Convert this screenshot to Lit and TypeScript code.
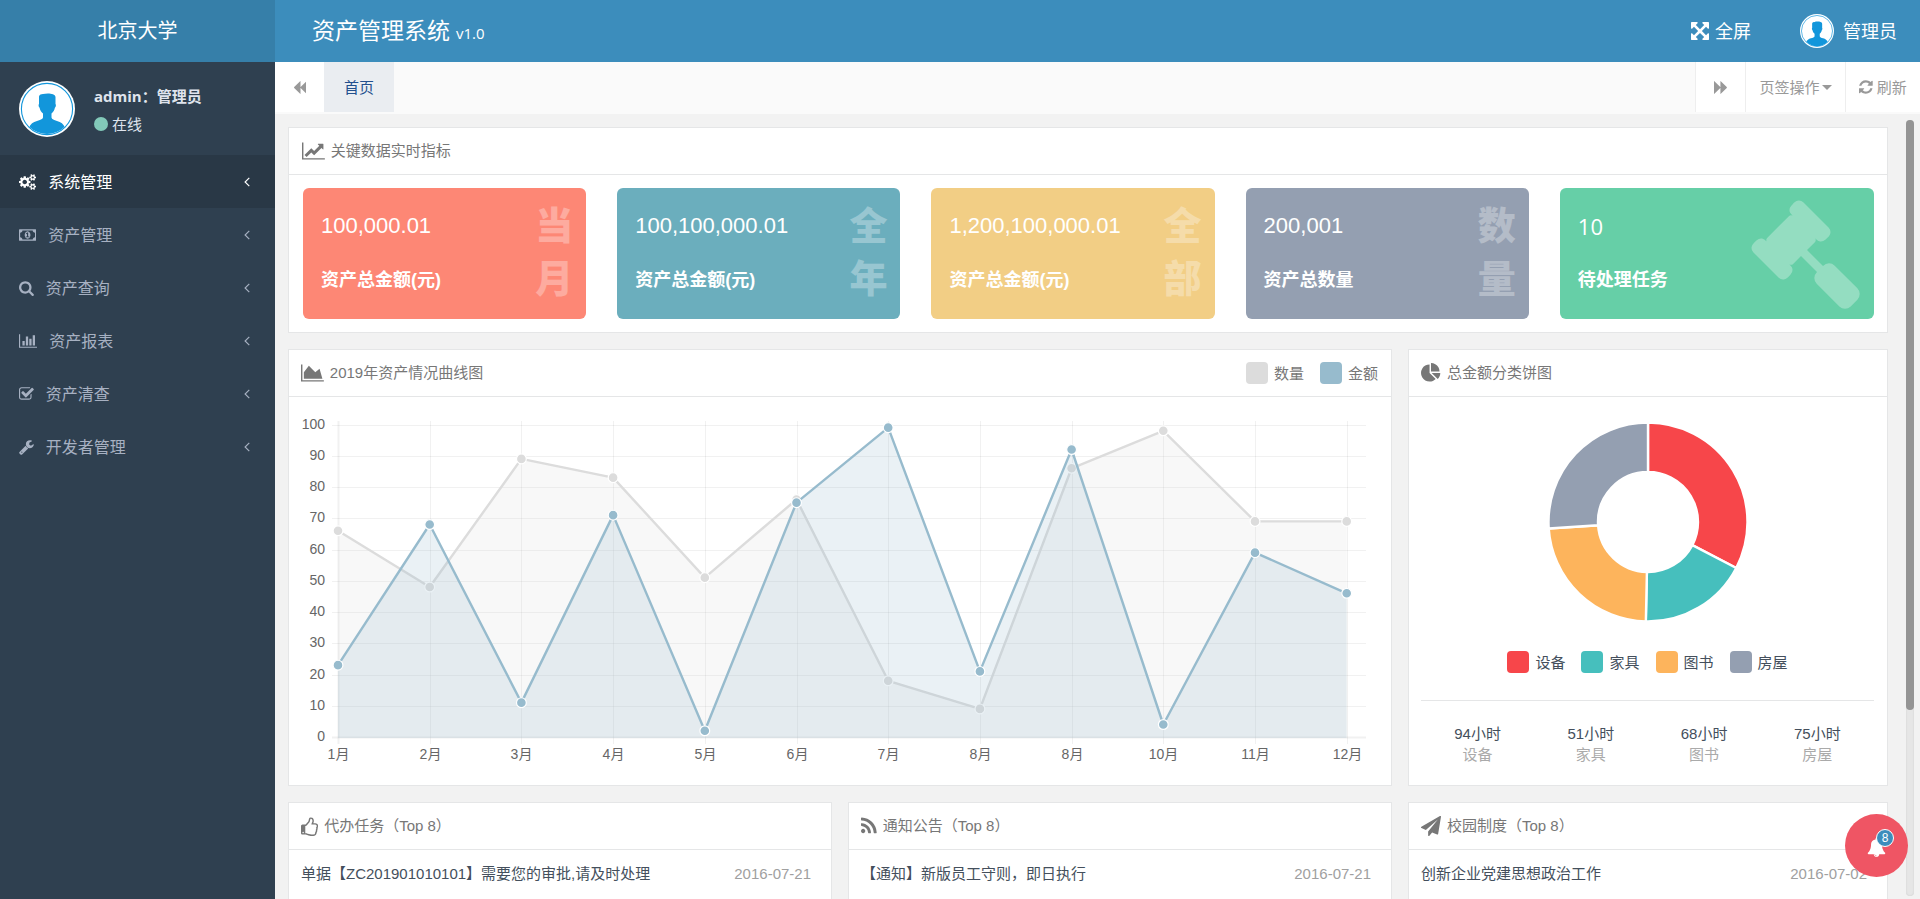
import { LitElement, html, svg, css } from "lit";
import { customElement, property } from "lit/decorators.js";
import { classMap } from "lit/directives/class-map.js";

// Icon outlines: [viewBox, path]
const ICONS: Record<string, [string, string]> = {
  cogs: ["0 0 1920 1792", "M896 896q0-106-75-181t-181-75-181 75-75 181 75 181 181 75 181-75 75-181zm768 512q0-52-38-90t-90-38-90 38-38 90q0 53 37.5 90.5t90.5 37.5 90.5-37.5 37.5-90.5zm0-1024q0-52-38-90t-90-38-90 38-38 90q0 53 37.5 90.5t90.5 37.5 90.5-37.5 37.5-90.5zm-384 421v185q0 10-7 19.5t-16 10.5l-155 24q-11 35-32 76 34 48 90 115 7 11 7 20 0 12-7 19-23 30-82.5 89.5t-78.5 59.5q-11 0-21-7l-115-90q-37 19-77 31-11 108-23 155-7 24-30 24h-186q-11 0-20-7.5t-10-17.5l-23-153q-34-10-75-31l-118 89q-7 7-20 7-11 0-21-8-144-133-144-160 0-9 7-19 10-14 41-53t47-61q-23-44-35-82l-152-24q-10-1-17-9.5t-7-19.5v-185q0-10 7-19.5t16-10.5l155-24q11-35 32-76-34-48-90-115-7-11-7-20 0-12 7-20 22-30 82-89t79-59q11 0 21 7l115 90q34-18 77-32 11-108 23-154 7-24 30-24h186q11 0 20 7.5t10 17.5l23 153q34 10 75 31l118-89q8-7 20-7 11 0 21 8 144 133 144 160 0 8-7 19-12 16-42 54t-45 60q23 48 34 82l152 23q10 2 17 10.5t7 19.5zm640 533v140q0 16-149 31-12 27-30 52 51 113 51 138 0 4-4 7-122 71-124 71-8 0-46-47t-52-68q-20 2-30 2t-30-2q-14 21-52 68t-46 47q-2 0-124-71-4-3-4-7 0-25 51-138-18-25-30-52-149-15-149-31v-140q0-16 149-31 13-29 30-52-51-113-51-138 0-4 4-7 4-2 35-20t59-34 30-16q8 0 46 46.5t52 67.5q20-2 30-2t30 2q51-71 92-112l6-2q4 0 124 70 4 3 4 7 0 25-51 138 17 23 30 52 149 15 149 31zm0-1024v140q0 16-149 31-12 27-30 52 51 113 51 138 0 4-4 7-122 71-124 71-8 0-46-47t-52-68q-20 2-30 2t-30-2q-14 21-52 68t-46 47q-2 0-124-71-4-3-4-7 0-25 51-138-18-25-30-52-149-15-149-31v-140q0-16 149-31 13-29 30-52-51-113-51-138 0-4 4-7 4-2 35-20t59-34 30-16q8 0 46 46.5t52 67.5q20-2 30-2t30 2q51-71 92-112l6-2q4 0 124 70 4 3 4 7 0 25-51 138 17 23 30 52 149 15 149 31z"],
  money: ["0 0 1920 1792", "M768 1152h384v-96h-128v-448h-114l-148 137 77 80q42-37 55-57h2v288h-128v96zm512-256q0 70-21 142t-59.5 134-101.5 101-138 39-138-39-101.5-101-59.5-134-21-142 21-142 59.5-134 101.5-101 138-39 138 39 101.5 101 59.5 134 21 142zm512 256v-512q-106 0-181-75t-75-181h-1152q0 106-75 181t-181 75v512q106 0 181 75t75 181h1152q0-106 75-181t181-75zm128-832v1152q0 26-19 45t-45 19h-1792q-26 0-45-19t-19-45v-1152q0-26 19-45t45-19h1792q26 0 45 19t19 45z"],
  search: ["64 0 1664 1792", "M1216 832q0-185-131.5-316.5t-316.5-131.5-316.5 131.5-131.5 316.5 131.5 316.5 316.5 131.5 316.5-131.5 131.5-316.5zm512 832q0 52-38 90t-90 38q-54 0-90-38l-343-342q-179 124-399 124-143 0-273.5-55.5t-225-150-150-225-55.5-273.5 55.5-273.5 150-225 225-150 273.5-55.5 273.5 55.5 225 150 150 225 55.5 273.5q0 220-124 399l343 343q37 37 37 90z"],
  bars: ["0 0 2048 1792", "M640 896v512h-256v-512h256zm384-512v1024h-256v-1024h256zm1024 1152v128h-2048v-1536h128v1408h1920zm-640-896v768h-256v-768h256zm384-384v1152h-256v-1152h256z"],
  check: ["64 0 1664 1792", "M1472 930v318q0 119-84.5 203.5t-203.5 84.5h-832q-119 0-203.5-84.5t-84.5-203.5v-832q0-119 84.5-203.5t203.5-84.5h832q63 0 117 25 15 7 18 23 3 17-9 29l-49 49q-10 10-23 10-3 0-9-2-23-6-45-6h-832q-66 0-113 47t-47 113v832q0 66 47 113t113 47h832q66 0 113-47t47-113v-254q0-13 9-22l64-64q10-10 23-10 6 0 12 3 20 8 20 29zm231-489l-814 814q-24 24-57 24t-57-24l-430-430q-24-24-24-57t24-57l110-110q24-24 57-24t57 24l263 263 647-647q24-24 57-24t57 24l110 110q24 24 24 57t-24 57z"],
  wrench: ["64 0 1664 1792", "M448 1472q0-26-19-45t-45-19-45 19-19 45 19 45 45 19 45-19 19-45zm644-420l-682 682q-37 37-90 37-52 0-91-37l-106-108q-38-36-38-90 0-53 38-91l681-681q39 98 114.5 173.5t173.5 114.5zm634-435q0 39-23 106-47 134-164.5 217.5t-258.5 83.5q-185 0-316.5-131.5t-131.5-316.5 131.5-316.5 316.5-131.5q58 0 121.5 16.5t107.5 46.5q16 11 16 28t-16 28l-293 169v224l193 107q5-3 79-48.5t135.5-81 70.5-35.5q15 0 23.5 10t8.5 25z"],
  angle: ["576 64 640 1792", "M1203 544q0 13-10 23l-393 393 393 393q10 10 10 23t-10 23l-50 50q-10 10-23 10t-23-10l-466-466q-10-10-10-23t10-23l466-466q10-10 23-10t23 10l50 50q10 10 10 23z"],
  line: ["0 0 2048 1792", "M2048 1536v128h-2048v-1536h128v1408h1920zm-128-1248v435q0 21-19.5 29.5t-35.5-7.5l-121-121-633 633q-10 10-23 10t-23-10l-233-233-416 416-192-192 585-585q10-10 23-10t23 10l233 233 464-464-121-121q-16-16-7.5-35.5t29.5-19.5h435q14 0 23 9t9 23z"],
  area: ["0 0 2048 1792", "M2048 1536v128h-2048v-1536h128v1408h1920zm-384-1024l256 896h-1664v-576l448-576 576 576z"],
  pie: ["0 0 1792 1792", "M768 890l546 546q-106 108-247.5 168t-298.5 60q-209 0-385.5-103t-279.5-279.5-103-385.5 103-385.5 279.5-279.5 385.5-103v762zm187 6h773q0 157-60 298.5t-168 247.5zm709-128h-768v-768q209 0 385.5 103t279.5 279.5 103 385.5z"],
  expand: ["128 128 1536 1536", "M1411 541l-355 355 355 355 144-144q29-31 70-14 39 17 39 59v448q0 26-19 45t-45 19h-448q-42 0-59-40-17-39 14-69l144-144-355-355-355 355 144 144q31 30 14 69-17 40-59 40h-448q-26 0-45-19t-19-45v-448q0-42 40-59 39-17 69 14l144 144 355-355-355-355-144 144q-19 19-45 19-12 0-24-5-40-17-40-59v-448q0-26 19-45t45-19h448q42 0 59 40 17 39-14 69l-144 144 355 355 355-355-144-144q-31-30-14-69 17-40 59-40h448q26 0 45 19t19 45v448q0 42-39 59-13 5-25 5-26 0-45-19z"],
  refresh: ["128 0 1536 1792", "M1639 1056q0 5-1 7-64 268-268 434.5t-478 166.5q-146 0-282.5-55t-243.5-157l-129 129q-19 19-45 19t-45-19-19-45v-448q0-26 19-45t45-19h448q26 0 45 19t19 45-19 45l-137 137q71 66 161 102t187 36q134 0 250-65t186-179q11-17 53-117 8-23 30-23h192q13 0 22.5 9.5t9.5 22.5zm25-800v448q0 26-19 45t-45 19h-448q-26 0-45-19t-19-45 19-45l138-138q-148-137-349-137-134 0-250 65t-186 179q-11 17-53 117-8 23-30 23h-199q-13 0-22.5-9.5t-9.5-22.5v-7q65-268 270-434.5t480-166.5q146 0 284 55.5t245 156.5l130-129q19-19 45-19t45 19 19 45z"],
  thumb: ["64 0 1536 1792", "M320 1472q0-26-19-45t-45-19-45 19-19 45 19 45 45 19 45-19 19-45zm1152-576q0-51-39-89.5t-89-38.5h-352q0-58 48-159.5t48-160.5q0-98-32-145t-128-47q-26 26-38 85t-30.5 125.5-59.5 109.5q-22 23-77 91-4 5-23 30t-31.5 41-34.5 42.5-40 44-38.5 35.5-40 27-35.5 9h-32v640h32q13 0 31.5 3t33 6.5 38 11 35 11.5 35.5 12.5 29 10.5q211 73 342 73h121q192 0 192-167 0-26-5-56 30-16 47.5-52.5t17.5-73.5-18-69q53-50 53-119 0-25-10-55.5t-25-47.5q32-1 53.5-47t21.5-81zm128-1q0 89-49 163 9 33 9 69 0 77-38 144 3 21 3 43 0 101-60 178 1 139-85 219.5t-227 80.5h-129q-96 0-189.5-22.5t-216.5-65.5q-116-40-138-40h-288q-53 0-90.5-37.5t-37.5-90.5v-640q0-53 37.5-90.5t90.5-37.5h274q36-24 137-155 58-75 107-128 24-25 35.5-85.5t30.5-126.5 62-108q39-37 90-37 84 0 151 32.5t102 101.5 35 186q0 93-48 192h176q104 0 180 76t76 179z"],
  rss: ["192 0 1408 1792", "M576 1344q0 80-56 136t-136 56-136-56-56-136 56-136 136-56 136 56 56 136zm512 123q2 28-17 48-18 21-47 21h-135q-25 0-43-16.5t-20-41.5q-22-229-184.5-391.5t-391.5-184.5q-25-2-41.5-20t-16.5-43v-135q0-29 21-47 17-17 43-17h5q160 13 306 80.5t259 181.5q114 113 181.5 259t80.5 306zm512 2q2 27-18 47-18 20-46 20h-143q-26 0-44.5-17.5t-19.5-42.5q-12-215-101-408.5t-231.5-336-336-231.5-408.5-102q-25-1-42.5-19.5t-17.5-43.5v-143q0-28 20-46 18-18 44-18h3q262 13 501.5 120t425.5 294q187 186 294 425.5t120 501.5z"],
  plane: ["0 0 1792 1792", "M1764 11q33 24 27 64l-256 1536q-5 29-32 45-14 8-31 8-11 0-24-5l-453-185-242 295q-18 23-49 23-13 0-22-4-19-7-30.5-23.5t-11.5-36.5v-349l864-1059-1069 925-395-162q-37-14-40-55-2-40 32-59l1664-960q15-9 32-9 20 0 36 11z"],
  bell: ["0 0 1792 1792", "M912 1696q0-16-16-16-59 0-101.5-42.5t-42.5-101.5q0-16-16-16t-16 16q0 73 51.5 124.5t124.5 51.5q16 0 16-16zm816-288q0 52-38 90t-90 38h-448q0 106-75 181t-181 75-181-75-75-181h-448q-52 0-90-38t-38-90q50-42 91-88t85-119.5 74.5-158.5 50-206 19.5-260q0-152 117-282.5t307-158.5q-8-19-8-39 0-40 28-68t68-28 68 28 28 68q0 20-8 39 190 28 307 158.5t117 282.5q0 139 19.5 260t50 206 74.5 158.5 85 119.5 91 88z"],
  backward: ["64 0 1664 1792", "M1683 141q19-19 32-13t13 32v1472q0 26-13 32t-32-13l-710-710q-9-9-13-19v710q0 26-13 32t-32-13l-710-710q-19-19-19-45t19-45l710-710q19-19 32-13t13 32v710q4-10 13-19z"],
  forward: ["64 0 1664 1792", "M109 1651q-19 19-32 13t-13-32v-1472q0-26 13-32t32 13l710 710q9 9 13 19v-710q0-26 13-32t32 13l710 710q19 19 19 45t-19 45l-710 710q-19 19-32 13t-13-32v-710q-4 10-13 19z"],
  gavel: ["0 0 1792 1792", "M1771 1536q0 53-37 90l-107 108q-39 37-91 37-53 0-90-37l-363-364q-38-36-38-90 0-53 43-96l-256-256-126 126q-14 14-34 14t-34-14q2 2 12.5 12t12.5 13 10 11.5 10 13.5 6 13.5 5.5 16.5 1.5 18q0 38-28 68-3 3-16.5 18t-19 20.5-18.5 16.5-22 15.5-22 9-26 4.5q-40 0-68-28l-408-408q-28-28-28-68 0-13 4.5-26t9-22 15.5-22 16.5-18.5 20.5-19 18-16.5q30-28 68-28 10 0 18 1.5t16.5 5.5 13.5 6 13.5 10 11.5 10 13 12.5 12 12.5q-14-14-14-34t14-34l348-348q14-14 34-14t34 14q-2-2-12.5-12t-12.5-13-10-11.5-10-13.5-6-13.5-5.5-16.5-1.5-18q0-38 28-68 3-3 16.5-18t19-20.5 18.5-16.5 22-15.5 22-9 26-4.5q40 0 68 28l408 408q28 28 28 68 0 13-4.5 26t-9 22-15.5 22-16.5 18.5-20.5 19-18 16.5q-30 28-68 28-10 0-18-1.5t-16.5-5.5-13.5-6-13.5-10-11.5-10-13-12.5-12-12.5q14 14 14 34t-14 34l-126 126 256 256q43-43 96-43 52 0 91 37l363 363q37 39 37 91z"],
};

@customElement("fa-icon")
class FaIcon extends LitElement {
  @property() name = "";
  static styles = css`
    :host { display: inline-flex; height: 1em; flex: none; }
    svg { height: 100%; width: auto; fill: currentColor; display: block; }
  `;
  render() {
    const [box, d] = ICONS[this.name];
    return html`<svg viewBox=${box} aria-hidden="true"><path d=${d}></path></svg>`;
  }
}

@customElement("user-avatar")
class UserAvatar extends LitElement {
  static styles = css`
    :host { display: block; flex: none; }
    svg { display: block; width: 100%; height: 100%; }
  `;
  render() {
    return html`<svg viewBox="0 0 56 56" aria-hidden="true">
      <defs><clipPath id="ring"><circle cx="28" cy="28" r="25"></circle></clipPath></defs>
      <circle cx="28" cy="28" r="28" fill="#fff"></circle>
      <circle cx="28" cy="28" r="25.6" fill="none" stroke="#1296db" stroke-width="1.1"></circle>
      <path clip-path="url(#ring)" fill="#1296db"
        d="M20 15.500c.6-2 2-2.200 4-2.500 4-.8 12-1 12.500 3v7c.8 1 .3 3-.6 3.800-.5 2.500-1.500 4.200-3.400 5.800v4c.3 1.800 2.500 2.600 5.500 3.300 4 1 6.500 3 8 6.500v10H10v-10c1.500-3.500 4-5.500 8-6.500 3-.7 5.700-1.500 6-3.300v-4c-1.900-1.600-2.900-3.300-3.400-5.800-.9-.8-1.400-2.800-.6-3.800z"></path>
    </svg>`;
  }
}

const MONTHS = ["1月", "2月", "3月", "4月", "5月", "6月", "7月", "8月", "8月", "10月", "11月", "12月"];
const SERIES = [
  { name: "数量", color: "#dcdcdc", data: [66, 48, 89, 83, 51, 76, 18, 9, 86, 98, 69, 69] },
  { name: "金额", color: "#97bbcd", data: [23, 68, 11, 71, 2, 75, 99, 21, 92, 4, 59, 46] },
];

@customElement("line-chart")
class LineChart extends LitElement {
  static styles = css`
    :host { display: block; }
    svg { display: block; width: 100%; height: auto; }
    .grid { stroke: rgba(0, 0, 0, 0.055); stroke-width: 1; }
    .axis { stroke: rgba(0, 0, 0, 0.055); stroke-width: 2; }
    text { font: 14px "Liberation Sans", "Noto Sans CJK SC", sans-serif; fill: #666; }
    .end { text-anchor: end; }
    .mid { text-anchor: middle; }
  `;
  render() {
    const left = 37, step = 91.7, bottom = 327, unit = 3.125;
    const px = (i: number) => left + i * step;
    const py = (v: number) => bottom - v * unit;
    const rows = Array.from({ length: 11 }, (_, i) => i * 10);
    return html`<svg viewBox="0 0 1077 362" role="img" aria-label="2019年资产情况曲线图">
      ${rows.map((v) => {
        const y = Math.round(py(v)) + 0.5;
        return svg`<line class=${v ? "grid" : "axis"} x1="31" x2="1065" y1=${y} y2=${y}></line>
          <text class="end" x="24" y=${Math.round(py(v)) + 4}>${v}</text>`;
      })}
      ${MONTHS.map((m, i) => {
        const x = Math.round(px(i)) + 0.5;
        return svg`<line class=${i ? "grid" : "axis"} x1=${x} x2=${x} y1="11" y2="334"></line>
          <text class="mid" x=${x} y="349">${m}</text>`;
      })}
      ${SERIES.map((s) => {
        const pts = s.data.map((v, i) => `${px(i).toFixed(1)},${py(v).toFixed(1)}`).join(" ");
        return svg`
          <polygon points=${`${left},${bottom + 1} ${pts} ${px(11)},${bottom + 1}`} fill=${s.color} fill-opacity="0.2"></polygon>
          <polyline points=${pts} fill="none" stroke=${s.color} stroke-width="2.4" stroke-linejoin="round"></polyline>
          ${s.data.map((v, i) => svg`<circle cx=${px(i)} cy=${py(v)} r="4.9" fill=${s.color} stroke="#fff" stroke-width="1.200"></circle>`)}`;
      })}
    </svg>`;
  }
}

const SLICES = [
  { name: "设备", hours: 94, color: "#f7464a" },
  { name: "家具", hours: 51, color: "#46bfbd" },
  { name: "图书", hours: 68, color: "#fdb45c" },
  { name: "房屋", hours: 75, color: "#949fb1" },
];

@customElement("donut-chart")
class DonutChart extends LitElement {
  static styles = css`
    :host { display: block; width: 200px; height: 200px; }
    svg { display: block; width: 100%; height: 100%; }
  `;
  render() {
    const total = SLICES.reduce((n, s) => n + s.hours, 0);
    const R = 99.5, r = 50;
    let at = -Math.PI / 2;
    const pt = (rad: number, a: number) => `${(rad * Math.cos(a)).toFixed(2)} ${(rad * Math.sin(a)).toFixed(2)}`;
    return html`<svg viewBox="-100 -100 200 200" role="img" aria-label="总金额分类饼图">
      ${SLICES.map((s) => {
        const a = at;
        const b = (at += (s.hours / total) * Math.PI * 2);
        return svg`<path fill=${s.color} stroke="#fff" stroke-width="2.400"
          d=${`M${pt(R, a)}A${R} ${R} 0 0 1 ${pt(R, b)}L${pt(r, b)}A${r} ${r} 0 0 0 ${pt(r, a)}Z`}></path>`;
      })}
    </svg>`;
  }
}

const MENU = [
  { icon: "cogs", text: "系统管理", active: true },
  { icon: "money", text: "资产管理" },
  { icon: "search", text: "资产查询" },
  { icon: "bars", text: "资产报表" },
  { icon: "check", text: "资产清查" },
  { icon: "wrench", text: "开发者管理" },
];

const CARDS = [
  { tone: "coral", value: "100,000.01", label: "资产总金额(元)", mark: ["当", "月"] },
  { tone: "teal", value: "100,100,000.01", label: "资产总金额(元)", mark: ["全", "年"] },
  { tone: "amber", value: "1,200,100,000.01", label: "资产总金额(元)", mark: ["全", "部"] },
  { tone: "slate", value: "200,001", label: "资产总数量", mark: ["数", "量"] },
  { tone: "green", value: "10", label: "待处理任务", mark: null },
];

const LISTS = [
  { icon: "thumb", title: "代办任务（Top 8）", items: [["单据【ZC201901010101】需要您的审批,请及时处理", "2016-07-21"]] },
  { icon: "rss", title: "通知公告（Top 8）", items: [["【通知】新版员工守则，即日执行", "2016-07-21"]] },
  { icon: "plane", title: "校园制度（Top 8）", items: [["创新企业党建思想政治工作", "2016-07-02"]] },
];

@customElement("app-root")
class AppRoot extends LitElement {
  static styles = css`
    :host {
      display: grid;
      grid-template-columns: 275px minmax(0, 1fr);
      height: 100vh;
      overflow: hidden;
      font: 15px/21px "Liberation Sans", "Noto Sans CJK SC", sans-serif;
      color: #444f5c;
      background: #f2f2f2;
    }
    * { box-sizing: border-box; }
    button { font: inherit; color: inherit; background: none; border: 0; padding: 0; margin: 0; cursor: pointer; }
    a { color: inherit; text-decoration: none; }
    ul { list-style: none; margin: 0; padding: 0; }
    h1, h2, p { margin: 0; font: inherit; }

    .side { background: #2f4050; color: #a7b1c2; font-family: "Open Sans", "Noto Sans CJK SC", sans-serif; }
    .brand { display: flex; align-items: center; justify-content: center; height: 62px;
      background: #367fa9; color: #fff; font-size: 20px; line-height: 28px; }
    .profile { display: flex; align-items: center; gap: 19px; height: 93px; padding: 0 19px; color: #dfe4ed; }
    .profile user-avatar { width: 56px; height: 56px; }
    .who { font-weight: 700; line-height: 30px; }
    .state { display: flex; align-items: center; gap: 4px; line-height: 26px; }
    .dot { width: 14px; height: 14px; border-radius: 50%; background: #82c9b9; }
    .item { display: flex; align-items: center; gap: 12px; height: 53px; padding: 0 25px 0 19px; font-size: 16px; line-height: 24px; }
    .item.active { background: #293846; color: #fff; }
    .item .more { margin-left: auto; }

    .page { display: grid; grid-template-rows: 62px 52px minmax(0, 1fr); min-width: 0; min-height: 0; }
    .top { display: flex; align-items: center; padding: 0 23px 0 37px; background: #3c8dbc; color: #fff;
      font-family: "Open Sans", "Noto Sans CJK SC", sans-serif; font-size: 18px; line-height: 26px; }
    .title { flex: 1; font-size: 23px; line-height: 32px; }
    .title small { font-size: 15px; }
    .full { display: flex; align-items: center; gap: 6px; margin-right: 49px; }
    .user { display: flex; align-items: center; gap: 9px; }
    .user user-avatar { width: 34px; height: 34px; }

    .tabs { display: flex; align-items: flex-start; background: #fafafa; color: #999; }
    .tabs button { display: flex; align-items: center; justify-content: center; height: 50px; background: #fff; }
    .roll { width: 49px; }
    .tabs .tab { padding: 0 20px; background: #eaedf1; color: #23508e; }
    .tabs .edge { border-left: 1px solid #eee; }
    .space { flex: 1; }
    .roll.edge { width: 50px; }
    .ops { width: 100px; gap: 2px; }
    .ops::after { content: ""; border: 5px solid transparent; border-top-color: currentColor; border-bottom: 0; }
    .reload { width: 75px; gap: 4px; }
    .reload fa-icon { font-size: 16px; }

    .body { display: flex; min-height: 0; }
    .main { flex: 1; min-width: 0; overflow: hidden; display: flex; flex-direction: column; gap: 16px; padding: 13px 18px 0 13px; }
    .track { width: 8px; margin: 6px 6px 3px 0; border-radius: 4px; background: #e6e6e6; box-shadow: inset 0 0 2px #ccc; }
    .thumb { height: 76%; border-radius: 4px; background: #949494; }

    .panel { background: #fff; border: 1px solid #e5e6e7; min-width: 0; flex: none; }
    .head { display: flex; align-items: center; gap: 6px; height: 47px; padding: 0 13px; border-bottom: 1px solid #e5e6e7; color: #777; }
    .row .head { padding-left: 12px; }
    .head > fa-icon { font-size: 20px; }
    .head h2 { flex: 1; padding-bottom: 2px; }
    .inner { padding: 13px 13px 13px 12px; }

    .cards { display: grid; grid-template-columns: repeat(5, minmax(0, 1fr)); padding: 13px 13px 13px 14px; }
    .cell { padding-right: 31px; }
    .cell:last-child { padding-right: 0; }
    .card { display: flex; justify-content: space-between; height: 131px; padding: 10px 13px 10px 18px; border-radius: 6px; color: #fff; }
    .coral { background: #fd8775; }
    .teal { background: #6baebd; }
    .amber { background: #f2ce85; }
    .slate { background: #949fb1; }
    .green { background: #66cfa7; }
    .value { padding-top: 1px; font-size: 22px; line-height: 54px; }
    .green .value { font-family: "Open Sans", sans-serif; }
    .label { font-size: 18px; line-height: 54px; font-weight: 700; white-space: nowrap; }
    .mark { display: flex; flex-direction: column; padding-top: 2px; font-size: 38px; line-height: 53px; font-weight: 900; opacity: 0.3; }
    .gavel { font-size: 112px; opacity: 0.3; }

    .row { display: grid; grid-template-columns: 34fr 34fr 30fr; gap: 16px; flex: none; }
    .wide { grid-column: span 2; }
    .keys { display: flex; align-items: center; gap: 16px; }
    .key { display: flex; align-items: center; gap: 6px; }
    .swatch { width: 22px; height: 22px; border-radius: 4px; }
    .donut { display: flex; flex-direction: column; align-items: center; gap: 29px; padding: 12px 0 27px; border-bottom: 1px solid #e5e6e7; }
    .stats { display: grid; grid-template-columns: repeat(4, 1fr); padding-top: 22px; text-align: center; }
    .stats span { display: block; color: #aaa; }

    .list { min-height: 320px; padding: 13px 13px 13px 12px; }
    .list li { display: flex; justify-content: space-between; padding-right: 7px; }
    time { color: #a0a0a0; }

    .fab { position: fixed; right: 12px; bottom: 22px; width: 63px; height: 63px; border-radius: 50%;
      display: flex; align-items: center; justify-content: center; padding-top: 4px; background: #ef5564; color: #fff; font-size: 19px; }
    .badge { position: absolute; top: 15px; right: 14px; width: 18px; height: 18px; border: 1px solid #fff; border-radius: 50%;
      background: #3c8dbc; font-size: 12px; line-height: 16px; text-align: center; }
  `;

  render() {
    return html`
      <aside class="side">
        <div class="brand">北京大学</div>
        <div class="profile">
          <user-avatar></user-avatar>
          <div>
            <p class="who">admin：管理员</p>
            <p class="state"><i class="dot"></i>在线</p>
          </div>
        </div>
        <nav>
          ${MENU.map((m) => html`<a href="#" class=${classMap({ item: true, active: !!m.active })}>
            <fa-icon name=${m.icon}></fa-icon><span>${m.text}</span><fa-icon class="more" name="angle"></fa-icon>
          </a>`)}
        </nav>
      </aside>
      <div class="page">
        <header class="top">
          <h1 class="title">资产管理系统 <small>v1.0</small></h1>
          <button class="full"><fa-icon name="expand"></fa-icon>全屏</button>
          <button class="user"><user-avatar></user-avatar>管理员</button>
        </header>
        <div class="tabs">
          <button class="roll" aria-label="向左"><fa-icon name="backward"></fa-icon></button>
          <button class="tab">首页</button>
          <span class="space"></span>
          <button class="roll edge" aria-label="向右"><fa-icon name="forward"></fa-icon></button>
          <button class="ops edge">页签操作</button>
          <button class="reload edge"><fa-icon name="refresh"></fa-icon>刷新</button>
        </div>
        <div class="body">
          <main class="main">
            <section class="panel">
              <div class="head"><fa-icon name="line"></fa-icon><h2>关键数据实时指标</h2></div>
              <div class="cards">
                ${CARDS.map((c) => html`<div class="cell"><div class="card ${c.tone}">
                  <div><p class="value">${c.value}</p><p class="label">${c.label}</p></div>
                  ${c.mark
                    ? html`<div class="mark">${c.mark.map((t) => html`<span>${t}</span>`)}</div>`
                    : html`<fa-icon class="gavel" name="gavel"></fa-icon>`}
                </div></div>`)}
              </div>
            </section>
            <div class="row">
              <section class="panel wide">
                <div class="head">
                  <fa-icon name="area"></fa-icon><h2>2019年资产情况曲线图</h2>
                  <div class="keys">${SERIES.map((s) => html`<span class="key">
                    <i class="swatch" style="background:${s.color}"></i>${s.name}</span>`)}</div>
                </div>
                <div class="inner"><line-chart></line-chart></div>
              </section>
              <section class="panel">
                <div class="head"><fa-icon name="pie"></fa-icon><h2>总金额分类饼图</h2></div>
                <div class="inner">
                  <div class="donut">
                    <donut-chart></donut-chart>
                    <div class="keys">${SLICES.map((s) => html`<span class="key">
                      <i class="swatch" style="background:${s.color}"></i>${s.name}</span>`)}</div>
                  </div>
                  <div class="stats">${SLICES.map((s) => html`<div>${s.hours}小时<span>${s.name}</span></div>`)}</div>
                </div>
              </section>
            </div>
            <div class="row">
              ${LISTS.map((l) => html`<section class="panel">
                <div class="head"><fa-icon name=${l.icon}></fa-icon><h2>${l.title}</h2></div>
                <ul class="list">${l.items.map(([text, date]) => html`<li><a href="#">${text}</a><time>${date}</time></li>`)}</ul>
              </section>`)}
            </div>
          </main>
          <div class="track"><div class="thumb"></div></div>
        </div>
      </div>
      <button class="fab" aria-label="消息"><fa-icon name="bell"></fa-icon><span class="badge">8</span></button>
    `;
  }
}
